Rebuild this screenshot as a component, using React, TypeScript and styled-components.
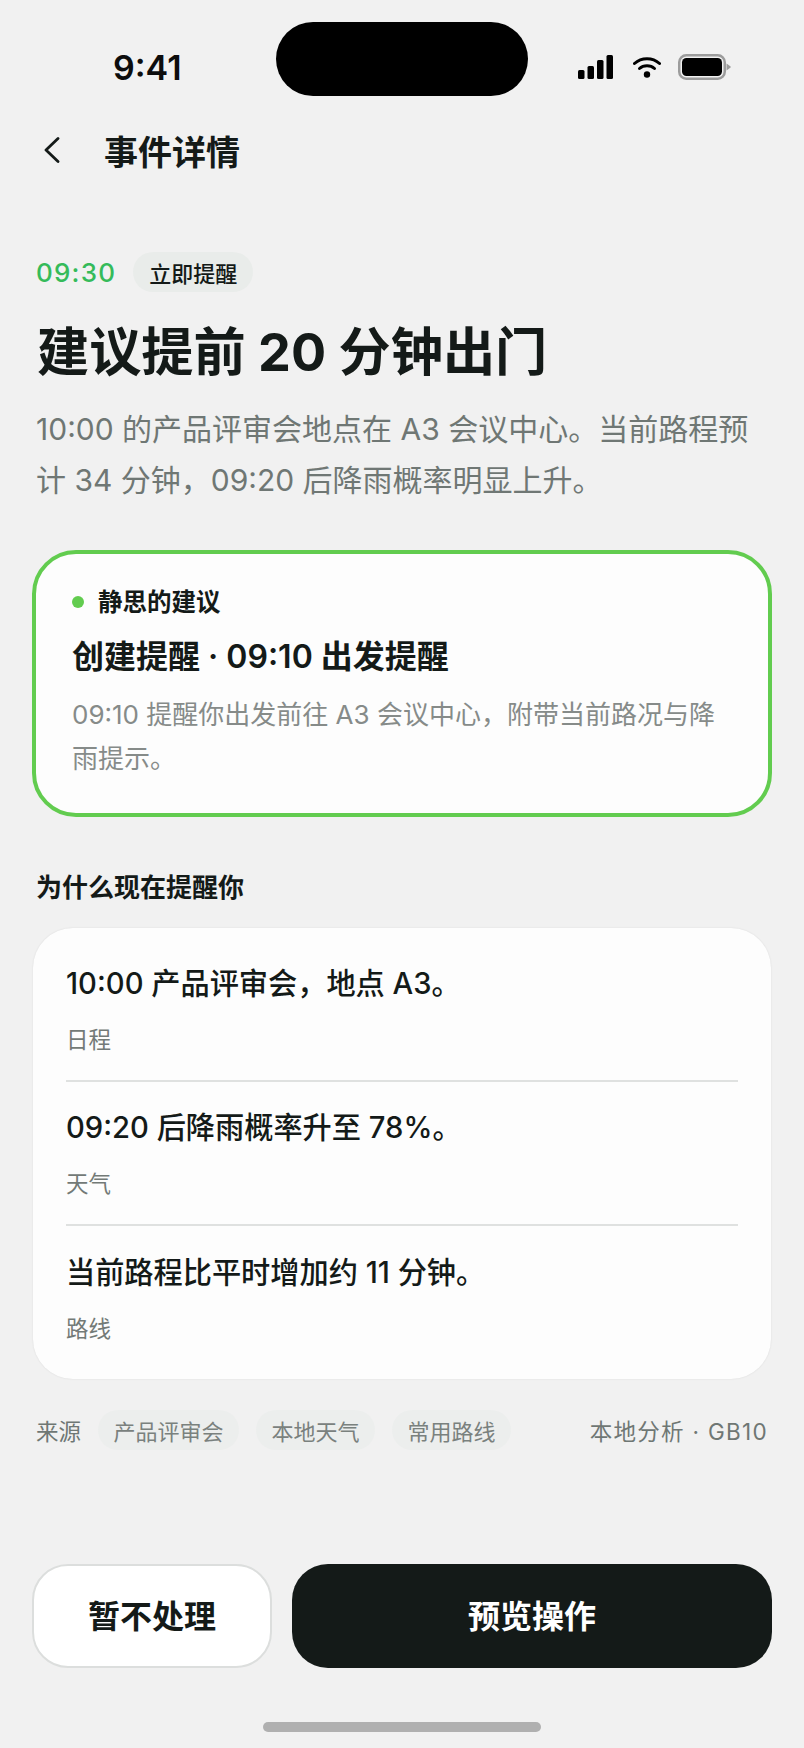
import React from "react";
import styled, { createGlobalStyle } from "styled-components";

const Global = createGlobalStyle`
  html, body { margin: 0; padding: 0; background: #f1f1f1; }
  * { box-sizing: border-box; }
  body { font-family: Inter, "Noto Sans CJK SC", sans-serif; }
`;

const Page = styled.div`
  position: relative;
  width: 804px;
  height: 1748px;
  overflow: hidden;
  background: #f1f1f1;
  color: #141a18;
  display: flex;
  flex-direction: column;
`;

const Island = styled.div`
  position: absolute;
  left: 276px;
  top: 22px;
  width: 252px;
  height: 74px;
  border-radius: 37px;
  background: #000;
`;

const StatusBar = styled.div`
  height: 100px;
  padding: 34px 73px 0 113px;
  display: flex;
  align-items: center;
  justify-content: space-between;
`;

const Clock = styled.div`
  font-family: Inter, sans-serif;
  font-size: 34px;
  font-weight: 600;
  color: #0d0d0d;
`;

const StatusIcons = styled.div`
  display: flex;
  align-items: center;
  gap: 20px;
`;

const BatteryIcon = styled.svg`
  margin-left: -3px;
`;

const Header = styled.div`
  height: 68px;
  padding: 0 0 0 44px;
  margin-top: 16px;
  display: flex;
  align-items: center;
  gap: 44px;
  font-size: 34px;
  font-weight: 600;
`;

const Content = styled.div`
  padding: 68px 32px 0;
  display: flex;
  flex-direction: column;
`;

const MetaRow = styled.div`
  height: 40px;
  padding-left: 4px;
  display: flex;
  align-items: center;
  gap: 17px;
`;

const MetaTime = styled.span`
  font-size: 26px;
  font-weight: 500;
  letter-spacing: 1.2px;
  color: #35bb5a;
`;

const Chip = styled.span`
  height: 40px;
  padding: 0 16px;
  border-radius: 20px;
  background: #e9ecea;
  font-size: 22px;
  font-weight: 500;
  display: inline-flex;
  align-items: center;
`;

const Title = styled.h1`
  margin: 24px 0 0 5px;
  font-size: 52.2px;
  line-height: 72px;
  font-weight: 700;
`;

const Lead = styled.p`
  margin: 16px 0 0 4px;
  width: 716px;
  font-size: 30px;
  line-height: 51px;
  color: #6f7774;
`;

const SuggestCard = styled.div`
  margin-top: 44px;
  height: 267px;
  padding: 31px 36px 0;
  border: 4px solid #62cc4f;
  border-radius: 44px;
  background: #fdfdfd;
`;

const SuggestLabel = styled.div`
  display: flex;
  align-items: center;
  gap: 14px;
  font-size: 24.5px;
  font-weight: 600;
  line-height: 34px;
`;

const Dot = styled.span`
  width: 12px;
  height: 12px;
  border-radius: 50%;
  background: #62cc4f;
`;

const SuggestTitle = styled.div`
  margin-top: 15px;
  font-size: 32px;
  line-height: 46px;
  font-weight: 600;
`;

const SuggestText = styled.div`
  margin-top: 13px;
  font-size: 26px;
  line-height: 44px;
  color: #868b89;
`;

const SectionTitle = styled.div`
  margin: 53px 0 0 4px;
  font-size: 26px;
  line-height: 36px;
  font-weight: 600;
`;

const ReasonCard = styled.div`
  margin-top: 22px;
  margin-left: 1px;
  margin-right: 1px;
  height: 451px;
  padding: 9px 33px 0;
  border-radius: 40px;
  background: #fdfdfd;
  box-shadow: 0 0 2px rgba(0, 0, 0, 0.1);
`;

const ReasonRow = styled.div<{ $last?: boolean }>`
  height: 144.5px;
  padding-top: 24.5px;
  border-bottom: ${(p) => (p.$last ? "none" : "2px solid #dfe1e0")};
`;

const ReasonText = styled.div`
  font-size: 29.2px;
  line-height: 44px;
  font-weight: 500;
`;

const ReasonTag = styled.div`
  margin-top: 19px;
  font-size: 22.5px;
  line-height: 30px;
  color: #737a77;
`;

const SourceRow = styled.div`
  margin-top: 31px;
  height: 40px;
  padding-left: 4px;
  padding-right: 4px;
  display: flex;
  align-items: center;
  gap: 17px;
  font-size: 22.5px;
  color: #6f7774;
`;

const SourceChips = styled.div`
  display: flex;
  gap: 17px;
`;

const SourceChip = styled.span`
  height: 40px;
  padding: 0 15.5px;
  border-radius: 20px;
  background: #eceeed;
  display: inline-flex;
  align-items: center;
  font-size: 22px;
  color: #7a817e;
`;

const SourceNote = styled.span`
  margin-left: auto;
  letter-spacing: 1.3px;
`;

const Actions = styled.div`
  position: absolute;
  left: 32px;
  right: 32px;
  top: 1564px;
  display: flex;
  gap: 20px;
`;

const GhostButton = styled.div`
  width: 240px;
  height: 104px;
  padding-bottom: 4px;
  border: 2px solid #dcdedd;
  border-radius: 36px;
  background: #fff;
  display: flex;
  align-items: center;
  justify-content: center;
  font-size: 32px;
  font-weight: 600;
`;

const PrimaryButton = styled(GhostButton)`
  width: 480px;
  border: none;
  background: #141a18;
  color: #fff;
`;

const HomeBar = styled.div`
  position: absolute;
  left: 263px;
  top: 1722px;
  width: 278px;
  height: 10px;
  border-radius: 5px;
  background: #b0b0b0;
`;

export default function App() {
  return (
    <Page>
      <Global />
      <Island />
      <StatusBar>
        <Clock>9:41</Clock>
        <StatusIcons>
          <svg width="35" height="24" viewBox="0 0 35 24">
            <rect x="0" y="15" width="6.5" height="9" rx="1.5" fill="#000" />
            <rect x="9.5" y="11" width="6.5" height="13" rx="1.5" fill="#000" />
            <rect x="19" y="5" width="6.5" height="19" rx="1.5" fill="#000" />
            <rect x="28.5" y="0" width="6.5" height="24" rx="1.5" fill="#000" />
          </svg>
          <svg width="28" height="22" viewBox="0 0 28 22">
            <path d="M1.5 7.5C8.5 1 19.5 1 26.5 7.5" fill="none" stroke="#000" strokeWidth="3" strokeLinecap="round" />
            <path d="M6.5 12.5C10.5 8.8 17.5 8.8 21.5 12.5" fill="none" stroke="#000" strokeWidth="3" strokeLinecap="round" />
            <circle cx="14" cy="18.5" r="3.2" fill="#000" />
          </svg>
          <BatteryIcon width="53" height="26" viewBox="0 0 53 26">
            <rect x="1.25" y="1.25" width="45.5" height="23.5" rx="7" fill="none" stroke="#9c9c9c" strokeWidth="2.5" />
            <rect x="4" y="4" width="40" height="18" rx="4.5" fill="#000" />
            <path d="M48.5 9.5L52 12a1.2 1.2 0 0 1 0 2l-3.5 2.5z" fill="#9c9c9c" />
          </BatteryIcon>
        </StatusIcons>
      </StatusBar>
      <Header>
        <svg width="16" height="26" viewBox="0 0 16 26">
          <path d="M14 1.5L2 13l12 11.5" fill="none" stroke="#141a18" strokeWidth="2.8" strokeLinecap="round" strokeLinejoin="round" />
        </svg>
        事件详情
      </Header>
      <Content>
        <MetaRow>
          <MetaTime>09:30</MetaTime>
          <Chip>立即提醒</Chip>
        </MetaRow>
        <Title>建议提前 20 分钟出门</Title>
        <Lead>10:00 的产品评审会地点在 A3 会议中心。当前路程预计 34 分钟，09:20 后降雨概率明显上升。</Lead>
        <SuggestCard>
          <SuggestLabel>
            <Dot />
            静思的建议
          </SuggestLabel>
          <SuggestTitle>创建提醒 · 09:10 出发提醒</SuggestTitle>
          <SuggestText>09:10 提醒你出发前往 A3 会议中心，附带当前路况与降雨提示。</SuggestText>
        </SuggestCard>
        <SectionTitle>为什么现在提醒你</SectionTitle>
        <ReasonCard>
          <ReasonRow>
            <ReasonText>10:00 产品评审会，地点 A3。</ReasonText>
            <ReasonTag>日程</ReasonTag>
          </ReasonRow>
          <ReasonRow>
            <ReasonText>09:20 后降雨概率升至 78%。</ReasonText>
            <ReasonTag>天气</ReasonTag>
          </ReasonRow>
          <ReasonRow $last>
            <ReasonText>当前路程比平时增加约 11 分钟。</ReasonText>
            <ReasonTag>路线</ReasonTag>
          </ReasonRow>
        </ReasonCard>
        <SourceRow>
          来源
          <SourceChips>
            <SourceChip>产品评审会</SourceChip>
            <SourceChip>本地天气</SourceChip>
            <SourceChip>常用路线</SourceChip>
          </SourceChips>
          <SourceNote>本地分析 · GB10</SourceNote>
        </SourceRow>
      </Content>
      <Actions>
        <GhostButton>暂不处理</GhostButton>
        <PrimaryButton>预览操作</PrimaryButton>
      </Actions>
      <HomeBar />
    </Page>
  );
}
